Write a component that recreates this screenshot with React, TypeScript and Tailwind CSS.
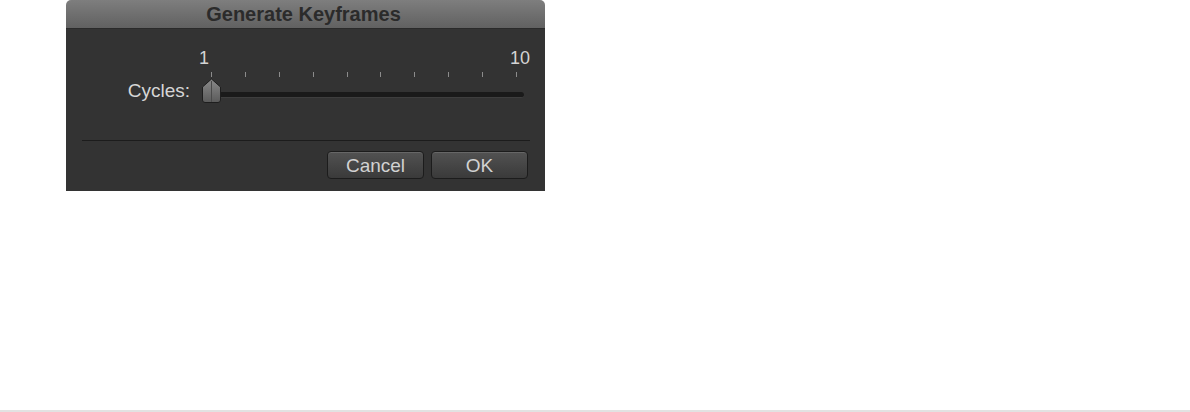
const TICKS = [0, 1, 2, 3, 4, 5, 6, 7, 8, 9];

function Thumb() {
  return (
    <svg width="21" height="26" viewBox="0 0 21 26" className="absolute left-[1px] top-[29px]">
      <defs>
        <linearGradient id="thumbFill" x1="0" y1="0" x2="0" y2="1">
          <stop offset="0" stopColor="#8a8a8a" />
          <stop offset="1" stopColor="#5a5a5a" />
        </linearGradient>
      </defs>
      <path
        d="M10.5 1 L19.5 9 L19.5 22 Q19.5 24.5 17 24.5 L4 24.5 Q1.5 24.5 1.5 22 L1.5 9 Z"
        fill="url(#thumbFill)"
        stroke="#1e1e1e"
        strokeWidth="1"
      />
      <line x1="10.5" y1="3" x2="10.5" y2="24" stroke="#4a4a4a" strokeWidth="1" />
    </svg>
  );
}

function CycleSlider() {
  return (
    <div className="relative ml-[10px] h-[56px] w-[332px]">
      <span className="absolute left-[-1px] top-0 text-[18px] leading-[18px] text-[#d4d4d4]">1</span>
      <span className="absolute left-[310px] top-0 text-[18px] leading-[18px] text-[#d4d4d4]">10</span>
      <div className="absolute left-[11px] top-[23px] flex w-[306px] justify-between">
        {TICKS.map((t) => (
          <span key={t} className="h-[5px] w-px bg-[#8c8c8c]" />
        ))}
      </div>
      <div className="absolute left-[5px] top-[43px] h-[6px] w-[319px] rounded-full border-b border-[#3e3e3e] bg-[#1a1a1a]" />
      <Thumb />
    </div>
  );
}

function DialogButton({ label }: { label: string }) {
  return (
    <button className="flex h-[28px] w-[97px] items-center justify-center rounded-[4px] border border-[#1c1c1c] bg-gradient-to-b from-[#525252] to-[#3a3a3a] text-[19px] leading-none text-[#d2d2d2] shadow-[inset_0_1px_0_rgba(255,255,255,0.12)]">
      {label}
    </button>
  );
}

export default function App() {
  return (
    <div className="flex h-[412px] w-[1190px] flex-col bg-white font-['Liberation_Sans',Arial,sans-serif]">
      <div className="ml-[66px] flex h-[191px] w-[479px] flex-col">
        <div className="flex h-[29px] items-center justify-center rounded-t-[5px] border-b border-[#2a2a2a] bg-gradient-to-b from-[#7e7e7e] to-[#616161] pr-[4px] text-[20px] font-bold text-[#2b2b2b]">
          Generate Keyframes
        </div>
        <div className="flex flex-1 flex-col bg-[#333333]">
          <div className="flex pl-[56px] pt-[20px]">
            <div className="mt-[32px] w-[68px] text-right text-[19px] leading-[19px] text-[#d6d6d6]">Cycles:</div>
            <CycleSlider />
          </div>
          <div className="ml-[16px] mr-[15px] mt-[35px] h-px bg-[#1c1c1c]" />
          <div className="mt-[10px] flex justify-end gap-[7px] pr-[17px]">
            <DialogButton label="Cancel" />
            <DialogButton label="OK" />
          </div>
        </div>
      </div>
      <div className="mt-auto h-[2px] bg-[#e2e2e2]" />
    </div>
  );
}
